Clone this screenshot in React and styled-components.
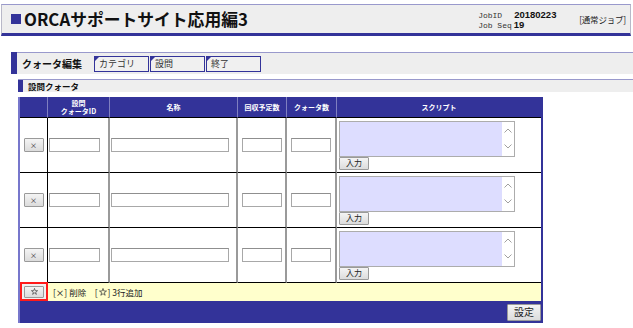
import React from "react";
import styled, { createGlobalStyle } from "styled-components";

const Global = createGlobalStyle`
  html, body { margin: 0; padding: 0; background: #ffffff; }
  body { font-family: "Noto Sans CJK JP", "Noto Sans", sans-serif; color: #000; }
  * { box-sizing: border-box; }
`;

const Page = styled.div`
  width: 633px;
  height: 328px;
  overflow: hidden;
  padding-top: 4px;
`;

const TitleBar = styled.header`
  margin: 0 2px 0 1px;
  height: 32px;
  background: #eeeeee;
  border-top: 1px solid #9999cc;
  border-left: 1px solid #b8b8c8;
  border-right: 1px solid #b8b8c8;
  border-bottom: 3px solid #333399;
  display: flex;
  align-items: center;
  padding: 0 4px 0 9px;
`;

const Square = styled.span`
  width: 10px;
  height: 10px;
  background: #333399;
  flex: none;
`;

const Title = styled.h1`
  margin: 0 0 0 3px;
  font-size: 16.8px;
  font-weight: 700;
  line-height: 1;
  letter-spacing: 0;
  color: #111;
`;

const TitleRight = styled.div`
  margin-left: auto;
  display: flex;
  align-items: center;
`;

const JobInfo = styled.div`
  display: flex;
  flex-direction: column;
  width: 101px;
  padding-top: 1px;
`;

const JobLine = styled.div`
  display: flex;
  align-items: baseline;
  height: 10px;
  line-height: 10px;
`;

const JobLabel = styled.span`
  font-family: "Liberation Mono", monospace;
  font-size: 8px;
  color: #333;
`;

const JobValue = styled.span`
  font-family: "Liberation Sans", sans-serif;
  font-weight: 700;
  font-size: 9.5px;
  margin-left: ${(p) => p.$gap}px;
  color: #111;
`;

const JobType = styled.span`
  font-size: 8.5px;
  color: #222;
  letter-spacing: -0.2px;
`;

const NavBar = styled.nav`
  margin: 16px 0 0 11px;
  height: 22px;
  background: #eeeeee;
  border-top: 1px solid #9999cc;
  display: flex;
  align-items: center;
`;

const NavMark = styled.span`
  width: 6px;
  align-self: stretch;
  margin-top: -1px;
  background: #333399;
`;

const NavTitle = styled.span`
  width: 72px;
  margin-left: 5px;
  font-size: 10px;
  font-weight: 700;
  color: #111;
`;

const Tabs = styled.div`
  display: flex;
  gap: 1px;
`;

const Tab = styled.a`
  position: relative;
  width: 55px;
  height: 16px;
  border: 1px solid #333399;
  background: #f0f0f0;
  font-size: 9px;
  line-height: 14px;
  padding-left: 4px;
  color: #333;
  &::before {
    content: "";
    position: absolute;
    left: 0;
    top: 0;
    border-top: 4px solid #333399;
    border-right: 4px solid transparent;
  }
`;

const SubHeader = styled.div`
  margin: 5px 0 0 18px;
  height: 13px;
  background: #eeeeee;
  border-top: 1px solid #9999cc;
  display: flex;
  align-items: center;
`;

const SubMark = styled.span`
  width: 5px;
  align-self: stretch;
  background: #333399;
`;

const SubTitle = styled.span`
  margin-left: 5px;
  font-size: 8.5px;
  font-weight: 700;
  color: #111;
`;

const Table = styled.div`
  margin: 5px 0 0 18px;
  width: 525px;
  display: grid;
  grid-template-columns: 28px 62px 128px 49px 50px 204px;
  grid-template-rows: 21px 55px 55px 55px 18px 22px;
  border-left: 2px solid #7777cc;
  border-right: 2px solid #333399;
`;

const HeadCell = styled.div`
  background: #333399;
  color: #fff;
  font-size: 7px;
  font-weight: 700;
  line-height: 8.5px;
  text-align: center;
  display: flex;
  align-items: center;
  justify-content: center;
  border-bottom: 1px solid #000;
  border-right: ${(p) => (p.$last ? "none" : "1px solid #8080c0")};
`;

const HeadText = styled.span`
  display: block;
  white-space: nowrap;
`;

const Cell = styled.div`
  display: flex;
  align-items: center;
  justify-content: ${(p) => (p.$center ? "center" : "flex-start")};
  padding-left: ${(p) => (p.$center ? 0 : 1)}px;
  border-bottom: 1px solid #000;
  border-right: ${(p) =>
    p.$line === "black" ? "1px solid #000" : p.$line === "gray" ? "2px solid #9a9a9a" : "none"};
`;

const ScriptCell = styled.div`
  display: flex;
  flex-direction: column;
  justify-content: center;
  padding-left: 2px;
  border-bottom: 1px solid #000;
`;

const Button = styled.button`
  font-family: "Noto Sans CJK JP", sans-serif;
  width: ${(p) => p.$w}px;
  height: ${(p) => p.$h}px;
  padding: 0;
  font-size: ${(p) => p.$fs}px;
  line-height: 1;
  color: #222;
  background: linear-gradient(#f4f4f4, #dcdcdc);
  border: 1px solid #9a9a9a;
  border-radius: 1px;
  display: flex;
  align-items: center;
  justify-content: center;
`;

const StarIcon = styled.svg`
  display: inline-block;
  vertical-align: -1px;
  margin: 0 1px;
`;

const TextInput = styled.input`
  width: ${(p) => p.$w}px;
  height: 14px;
  padding: 0 2px;
  border: 1px solid #a8a8a8;
  border-top-color: #8f8f8f;
  background: #fff;
  font-size: 9px;
  outline: none;
`;

const ScriptBox = styled.div`
  width: 176px;
  height: 36px;
  border: 1px solid #acacac;
  display: flex;
  background: #fff;
`;

const ScriptArea = styled.textarea`
  flex: 1;
  border: none;
  background: #ddddff;
  resize: none;
  padding: 0;
  margin: 0;
  outline: none;
`;

const ScrollTrack = styled.div`
  width: 12px;
  display: flex;
  flex-direction: column;
  justify-content: space-between;
  align-items: center;
  padding: 6px 0 7px;
`;

const Footer = styled.div`
  grid-column: 2 / -1;
  background: #ffffcc;
  display: flex;
  align-items: center;
  padding-left: 5px;
  font-size: 8.5px;
  color: #222;
  white-space: pre;
`;

const AddCell = styled.div`
  border: 2px solid #ff1a1a;
  background: #f0f0f0;
  margin-top: -1px;
  display: flex;
  align-items: center;
  justify-content: center;
`;

const BottomBar = styled.div`
  grid-column: 1 / -1;
  background: #333399;
  display: flex;
  align-items: center;
  justify-content: flex-end;
`;

const Chevron = ({ up }) => (
  <svg width="8" height="5" viewBox="0 0 8 5">
    <path
      d={up ? "M0.5 4.5 L4 1 L7.5 4.5" : "M0.5 0.5 L4 4 L7.5 0.5"}
      fill="none"
      stroke="#a0a0a0"
      strokeWidth="1"
    />
  </svg>
);

const Star = ({ size = 7 }) => (
  <StarIcon width={size} height={size} viewBox="0 0 10 10" aria-label="☆">
    <path
      d="M5 0.6 L6.1 3.8 L9.4 3.8 L6.7 5.8 L7.7 9.1 L5 7.1 L2.3 9.1 L3.3 5.8 L0.6 3.8 L3.9 3.8 Z"
      fill="none"
      stroke="#333"
      strokeWidth="0.9"
      strokeLinejoin="round"
    />
  </StarIcon>
);

const headers = [
  { label: [] },
  { label: ["設問", "クォータID"] },
  { label: ["名称"] },
  { label: ["回収予定数"] },
  { label: ["クォータ数"] },
  { label: ["スクリプト"], last: true },
];

function Row() {
  return (
    <>
      <Cell $center $line="black">
        <Button $w={20} $h={14} $fs={7}>×</Button>
      </Cell>
      <Cell $line="gray">
        <TextInput $w={51} />
      </Cell>
      <Cell $line="gray">
        <TextInput $w={118} />
      </Cell>
      <Cell $center $line="gray">
        <TextInput $w={40} />
      </Cell>
      <Cell $center $line="gray">
        <TextInput $w={40} />
      </Cell>
      <ScriptCell>
        <ScriptBox>
          <ScriptArea />
          <ScrollTrack>
            <Chevron up />
            <Chevron />
          </ScrollTrack>
        </ScriptBox>
        <Button $w={30} $h={13} $fs={8}>入力</Button>
      </ScriptCell>
    </>
  );
}

export default function App() {
  return (
    <Page>
      <Global />
      <TitleBar>
        <Square />
        <Title>ORCAサポートサイト応用編3</Title>
        <TitleRight>
          <JobInfo>
            <JobLine>
              <JobLabel>JobID</JobLabel>
              <JobValue $gap={12}>20180223</JobValue>
            </JobLine>
            <JobLine>
              <JobLabel>Job Seq</JobLabel>
              <JobValue $gap={2}>19</JobValue>
            </JobLine>
          </JobInfo>
          <JobType>[通常ジョブ]</JobType>
        </TitleRight>
      </TitleBar>

      <NavBar>
        <NavMark />
        <NavTitle>クォータ編集</NavTitle>
        <Tabs>
          <Tab>カテゴリ</Tab>
          <Tab>設問</Tab>
          <Tab>終了</Tab>
        </Tabs>
      </NavBar>

      <SubHeader>
        <SubMark />
        <SubTitle>設問クォータ</SubTitle>
      </SubHeader>

      <Table>
        {headers.map((h, i) => (
          <HeadCell key={i} $last={h.last}>
            <div>
              {h.label.map((l, j) => (
                <HeadText key={j}>{l}</HeadText>
              ))}
            </div>
          </HeadCell>
        ))}
        <Row />
        <Row />
        <Row />
        <AddCell>
          <Button $w={20} $h={12} $fs={7}>
            <Star size={7} />
          </Button>
        </AddCell>
        <Footer>
          [×] 削除　[<Star size={8} />] 3行追加
        </Footer>
        <BottomBar>
          <Button $w={34} $h={17} $fs={10}>設定</Button>
        </BottomBar>
      </Table>
    </Page>
  );
}
